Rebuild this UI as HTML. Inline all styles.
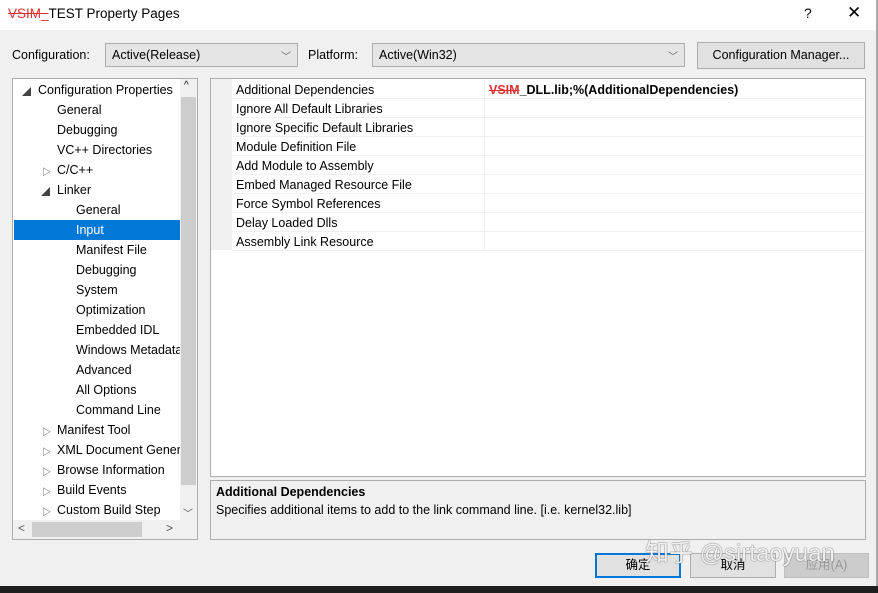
<!DOCTYPE html>
<html><head><style>
*{margin:0;padding:0;box-sizing:border-box}
body{width:878px;height:593px;background:#f0f0f0;font-family:"Liberation Sans","Noto Sans CJK SC",sans-serif;font-size:12.5px;color:#000;position:relative;overflow:hidden}
.a{position:absolute;white-space:nowrap}
.combo{position:absolute;height:24px;border:1px solid #adadad;background:#e5e5e5;padding:4px 6px}
.combo .ch{position:absolute;right:6px;top:4px;color:#666;font-size:10px}
.btn{position:absolute;height:25px;border:1px solid #adadad;background:#e1e1e1;text-align:center;line-height:23px}
.row{position:absolute;left:232px;width:632px;height:19px;border-bottom:1px solid #f0f0f0;line-height:20px;padding-left:4px}
.row .v{position:absolute;left:252px;top:0;bottom:-1px;border-left:1px solid #f0f0f0;padding-left:4px;font-weight:bold}
.ti{position:absolute;height:20px;line-height:22px}
.tri{position:absolute;font-size:9px;color:#444}
</style></head><body>
<div class="a" style="left:0;top:0;width:878px;height:30px;background:#fff"></div>
<div class="a" style="left:8px;top:6px;font-size:13.5px"><span style="color:#d33;text-decoration:line-through">VSIM_</span>TEST Property Pages</div>
<div class="a" style="left:804px;top:5px;font-size:14px">?</div>
<div class="a" style="left:847px;top:3px;font-size:17px">✕</div>
<div class="a" style="left:876px;top:0;width:2px;height:593px;background:#aaa"></div>

<div class="a" style="left:12px;top:48px">Configuration:</div>
<div class="combo" style="left:105px;top:43px;width:193px">Active(Release)<span class="ch">﹀</span></div>
<div class="a" style="left:308px;top:48px">Platform:</div>
<div class="combo" style="left:372px;top:43px;width:313px">Active(Win32)<span class="ch">﹀</span></div>
<div class="btn" style="left:697px;top:42px;width:168px;height:27px;line-height:25px">Configuration Manager...</div>

<div class="a" style="left:12px;top:78px;width:186px;height:462px;border:1px solid #adadad;background:#fff;overflow:hidden">
<div class="a" style="left:1px;top:141px;width:166px;height:20px;background:#0078d7"></div>
<div class="a" style="left:167px;top:0;width:17px;height:441px;background:#f0f0f0"></div>
<div class="a" style="left:168px;top:18px;width:15px;height:388px;background:#cdcdcd"></div>
<div class="a" style="left:171px;top:1px;font-size:10px">^</div>
<div class="a" style="left:170px;top:426px;font-size:10px;color:#555">﹀</div>
<div class="a" style="left:0;top:441px;width:184px;height:19px;background:#f0f0f0"></div>
<div class="a" style="left:19px;top:443px;width:110px;height:15px;background:#cdcdcd"></div>
<div class="a" style="left:5px;top:442px;font-size:12px;color:#555">&lt;</div>
<div class="a" style="left:153px;top:442px;font-size:12px;color:#555">&gt;</div>
</div>
<div class="tri a" style="left:22px;top:85px">◢</div>
<div class="ti a" style="left:38px;top:79px">Configuration Properties</div>
<div class="ti a" style="left:57px;top:99px">General</div>
<div class="ti a" style="left:57px;top:119px">Debugging</div>
<div class="ti a" style="left:57px;top:139px">VC++ Directories</div>
<div class="tri a" style="left:42px;top:165px">▷</div>
<div class="ti a" style="left:57px;top:159px">C/C++</div>
<div class="tri a" style="left:41px;top:185px">◢</div>
<div class="ti a" style="left:57px;top:179px">Linker</div>
<div class="ti a" style="left:76px;top:199px">General</div>
<div class="ti a" style="left:76px;top:219px;color:#fff">Input</div>
<div class="ti a" style="left:76px;top:239px">Manifest File</div>
<div class="ti a" style="left:76px;top:259px">Debugging</div>
<div class="ti a" style="left:76px;top:279px">System</div>
<div class="ti a" style="left:76px;top:299px">Optimization</div>
<div class="ti a" style="left:76px;top:319px">Embedded IDL</div>
<div class="ti a" style="left:76px;top:339px;width:104px;overflow:hidden">Windows Metadata</div>
<div class="ti a" style="left:76px;top:359px">Advanced</div>
<div class="ti a" style="left:76px;top:379px">All Options</div>
<div class="ti a" style="left:76px;top:399px">Command Line</div>
<div class="tri a" style="left:42px;top:425px">▷</div><div class="ti a" style="left:57px;top:419px">Manifest Tool</div>
<div class="tri a" style="left:42px;top:445px">▷</div><div class="ti a" style="left:57px;top:439px;width:123px;overflow:hidden">XML Document Generator</div>
<div class="tri a" style="left:42px;top:465px">▷</div><div class="ti a" style="left:57px;top:459px">Browse Information</div>
<div class="tri a" style="left:42px;top:485px">▷</div><div class="ti a" style="left:57px;top:479px">Build Events</div>
<div class="tri a" style="left:42px;top:505px">▷</div><div class="ti a" style="left:57px;top:499px">Custom Build Step</div>

<div class="a" style="left:210px;top:78px;width:656px;height:399px;border:1px solid #adadad;background:#fff"></div>
<div class="a" style="left:211px;top:79px;width:21px;height:171px;background:#f0f0f0"></div>
<div class="row" style="top:80px">Additional Dependencies<span class="v"><span style="color:#d33;text-decoration:line-through">VSIM</span>_DLL.lib;%(AdditionalDependencies)</span></div>
<div class="row" style="top:99px">Ignore All Default Libraries<span class="v"></span></div>
<div class="row" style="top:118px">Ignore Specific Default Libraries<span class="v"></span></div>
<div class="row" style="top:137px">Module Definition File<span class="v"></span></div>
<div class="row" style="top:156px">Add Module to Assembly<span class="v"></span></div>
<div class="row" style="top:175px">Embed Managed Resource File<span class="v"></span></div>
<div class="row" style="top:194px">Force Symbol References<span class="v"></span></div>
<div class="row" style="top:213px">Delay Loaded Dlls<span class="v"></span></div>
<div class="row" style="top:232px">Assembly Link Resource<span class="v"></span></div>

<div class="a" style="left:210px;top:480px;width:656px;height:60px;border:1px solid #adadad;background:#f0f0f0"></div>
<div class="a" style="left:216px;top:485px;font-weight:bold">Additional Dependencies</div>
<div class="a" style="left:216px;top:503px">Specifies additional items to add to the link command line. [i.e. kernel32.lib]</div>

<div class="btn" style="left:595px;top:553px;width:86px;border:2px solid #0078d7;line-height:21px">确定</div>
<div class="btn" style="left:690px;top:553px;width:86px">取消</div>
<div class="btn" style="left:784px;top:553px;width:85px;color:#999;background:#ccc;border-color:#bfbfbf">应用(A)</div>
<div class="a" style="left:645px;top:533px;font-size:24px;color:rgba(255,255,255,.9);text-shadow:0 0 1px #666,0 0 1px #666">知乎 @sirtaoyuan</div>
<div class="a" style="left:0;top:586px;width:878px;height:7px;background:#1e1e1e"></div>
</body></html>
